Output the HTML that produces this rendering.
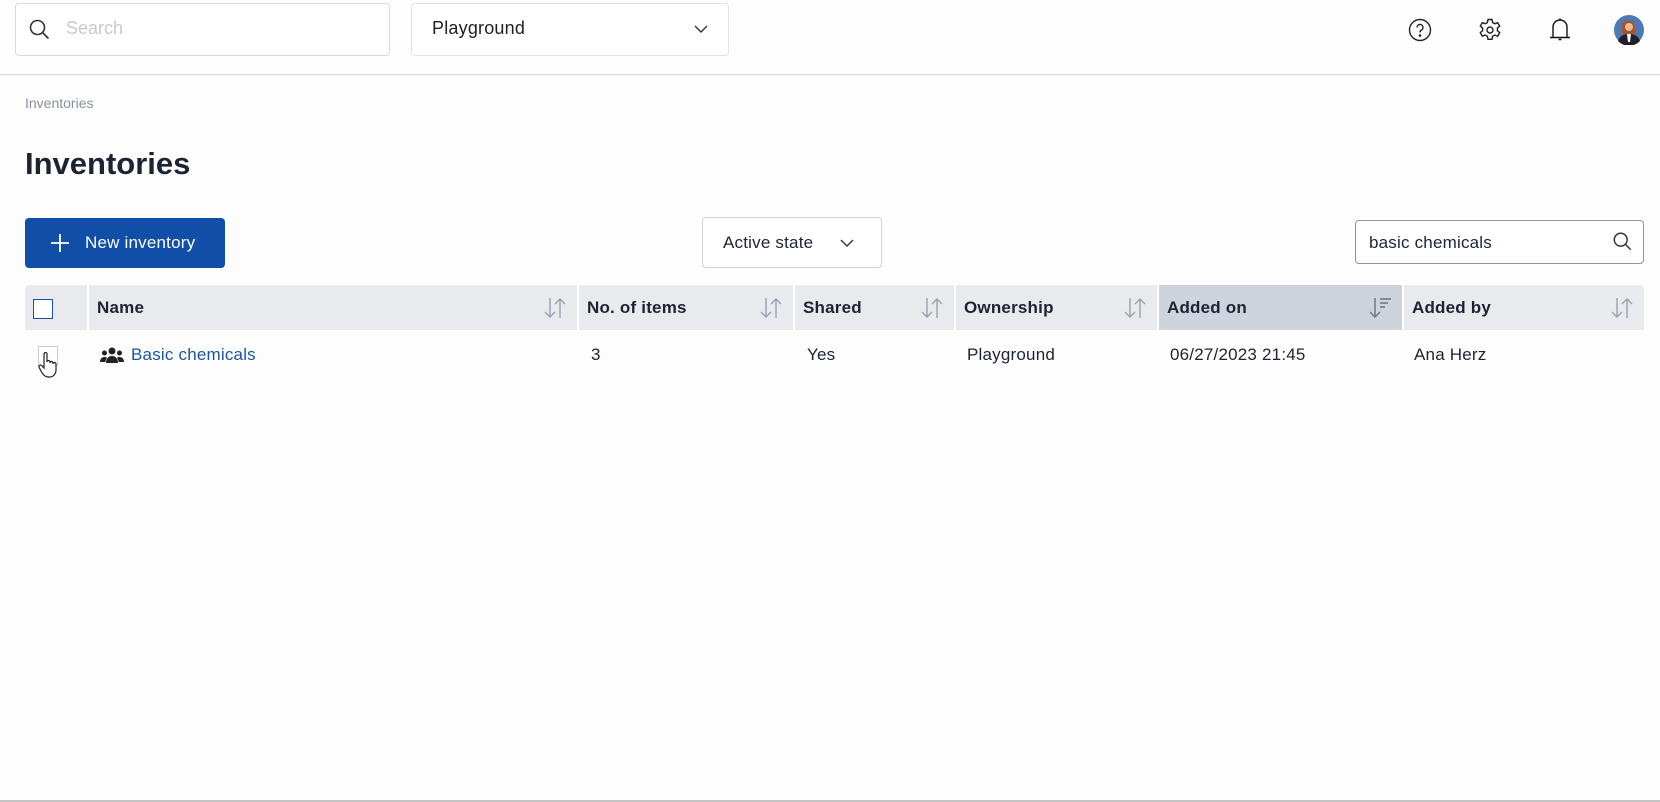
<!DOCTYPE html>
<html><head><meta charset="utf-8"><style>
*{box-sizing:border-box;margin:0;padding:0}
body{width:1660px;height:802px;background:#fdfdfd;font-family:"Liberation Sans",Arial,sans-serif;color:#1c2333;position:relative;overflow:hidden}
.abs{position:absolute}
.box{border:1px solid #cfd3dc;border-radius:4px;background:#fff}
.th{position:absolute;top:285px;height:45px;background:#e9eaee;font-weight:bold;font-size:17px;line-height:45px;padding-left:8px;letter-spacing:0.2px}
.th .s{position:absolute;right:10px;top:12px}
.td{position:absolute;top:344px;font-size:17px;line-height:22px;letter-spacing:0.2px}
</style></head><body>
<div class="abs box" style="left:15px;top:3px;width:375px;height:53px;border-color:#d6d9e0"></div>
<svg class="abs" style="left:28px;top:18px" width="24" height="24" viewBox="0 0 24 24" fill="none" stroke="#333" stroke-width="1.6"><circle cx="9.5" cy="9.5" r="7"/><path d="M14.5 14.5l6 6"/></svg>
<div class="abs" style="left:66px;top:18px;font-size:18px;color:#c4c9d4">Search</div>
<div class="abs box" style="left:411px;top:3px;width:318px;height:53px;border-color:#e2e4ea"></div>
<div class="abs" style="left:432px;top:18px;font-size:18px;color:#222;letter-spacing:0.2px">Playground</div>
<svg class="abs" style="left:694px;top:24px" width="14" height="10" viewBox="0 0 14 10" fill="none" stroke="#333" stroke-width="1.4"><path d="M1 2l6 6 6-6"/></svg>
<svg class="abs" style="left:1408px;top:18px" width="24" height="24" viewBox="0 0 24 24" fill="none" stroke="#222" stroke-width="1.4"><circle cx="12" cy="12" r="10.5"/><path d="M9 9.5a3 3 0 1 1 4 2.8c-1 .5-1 1.2-1 2.2"/><circle cx="12" cy="17.5" r=".6" fill="#222"/></svg>
<svg class="abs" style="left:1478px;top:18px" width="24" height="24" viewBox="0 0 24 24" fill="none" stroke="#222" stroke-width="1.4"><path d="M10 1.5h4l.6 3 2.2 1.2 2.9-1 2 3.4-2.3 2v2.6l2.3 2-2 3.4-2.9-1-2.2 1.2-.6 3h-4l-.6-3-2.2-1.2-2.9 1-2-3.4 2.3-2v-2.6l-2.3-2 2-3.4 2.9 1 2.2-1.2z"/><circle cx="12" cy="12" r="3"/></svg>
<svg class="abs" style="left:1548px;top:17px" width="24" height="26" viewBox="0 0 24 26" fill="none" stroke="#111" stroke-width="1.4"><path d="M5 20V10a7 7 0 0 1 14 0v10M2 20.5h20M12 1.5v1.5M10.5 22.5h3"/></svg>
<svg class="abs" style="left:1614px;top:15px" width="30" height="30" viewBox="0 0 30 30"><circle cx="15" cy="15" r="15" fill="#4d79b5"/><path d="M8 10c0-6 13-6 13 1v8H8z" fill="#a5532f"/><circle cx="15" cy="12" r="4" fill="#e8b89a"/><path d="M4 26c2-6 7-7 11-7s9 1 11 7a15 15 0 0 1-22 0z" fill="#1f1f2a"/><path d="M13 19h4l-1 8h-2z" fill="#fff"/></svg>
<div class="abs" style="left:0;top:74px;width:1660px;height:1px;background:#d6d6e0"></div>
<div class="abs" style="left:25px;top:95px;font-size:14px;color:#8a909c">Inventories</div>
<div class="abs" style="left:25px;top:146px;font-size:31px;font-weight:bold;color:#1c2333">Inventories</div>
<div class="abs" style="left:25px;top:218px;width:200px;height:50px;background:#104ea8;border-radius:4px;color:#fff;font-size:17px;line-height:50px;padding-left:60px;letter-spacing:0.2px">New inventory</div>
<svg class="abs" style="left:51px;top:234px" width="18" height="18" viewBox="0 0 18 18" stroke="#fff" stroke-width="1.8"><path d="M9 0v18M0 9h18"/></svg>
<div class="abs box" style="left:702px;top:217px;width:180px;height:51px"></div>
<div class="abs" style="left:723px;top:233px;font-size:17px;letter-spacing:0.2px">Active state</div>
<svg class="abs" style="left:840px;top:238px" width="14" height="10" viewBox="0 0 14 10" fill="none" stroke="#333" stroke-width="1.4"><path d="M1 2l6 6 6-6"/></svg>
<div class="abs box" style="left:1355px;top:220px;width:289px;height:44px;border-color:#8c93a6"></div>
<div class="abs" style="left:1369px;top:233px;font-size:17px;letter-spacing:0.2px">basic chemicals</div>
<svg class="abs" style="left:1612px;top:231px" width="22" height="22" viewBox="0 0 24 24" fill="none" stroke="#333" stroke-width="1.6"><circle cx="9.5" cy="9.5" r="7"/><path d="M14.5 14.5l6 6"/></svg>
<div class="abs" style="left:25px;top:285px;width:62px;height:45px;background:#e9eaee;border-radius:4px 0 0 0"></div>
<div class="abs" style="left:33px;top:299px;width:20px;height:20px;border:1.5px solid #1a4fa0;background:#fff"></div>
<div class="th" style="left:89px;width:488px">Name<svg class="s" width="24" height="22" viewBox="0 0 24 22" fill="none" stroke="#9aa0ae" stroke-width="1.4"><path d="M7 1v19M2 15l5 5 5-5M17 21V2M12 7l5-5 5 5"/></svg></div>
<div class="th" style="left:579px;width:214px">No. of items<svg class="s" width="24" height="22" viewBox="0 0 24 22" fill="none" stroke="#9aa0ae" stroke-width="1.4"><path d="M7 1v19M2 15l5 5 5-5M17 21V2M12 7l5-5 5 5"/></svg></div>
<div class="th" style="left:795px;width:159px">Shared<svg class="s" width="24" height="22" viewBox="0 0 24 22" fill="none" stroke="#9aa0ae" stroke-width="1.4"><path d="M7 1v19M2 15l5 5 5-5M17 21V2M12 7l5-5 5 5"/></svg></div>
<div class="th" style="left:956px;width:201px">Ownership<svg class="s" width="24" height="22" viewBox="0 0 24 22" fill="none" stroke="#9aa0ae" stroke-width="1.4"><path d="M7 1v19M2 15l5 5 5-5M17 21V2M12 7l5-5 5 5"/></svg></div>
<div class="th" style="left:1159px;width:243px;background:#cfd3dc">Added on<svg class="s" width="24" height="22" viewBox="0 0 24 22" fill="none" stroke="#6b7282" stroke-width="1.4"><path d="M7 1v19M2 15l5 5 5-5M12 2h11M12 6h8M12 10h5"/></svg></div>
<div class="th" style="left:1404px;width:240px;border-radius:0 4px 0 0">Added by<svg class="s" width="24" height="22" viewBox="0 0 24 22" fill="none" stroke="#9aa0ae" stroke-width="1.4"><path d="M7 1v19M2 15l5 5 5-5M17 21V2M12 7l5-5 5 5"/></svg></div>
<div class="abs" style="left:38px;top:346px;width:20px;height:20px;border:1px solid #c9ccd6;background:#fff"></div>
<svg class="abs" style="left:38px;top:352px" width="20" height="26" viewBox="0 0 20 26" fill="#fff" stroke="#222" stroke-width="1.2"><path d="M6 2a1.5 1.5 0 0 1 3 0v8a1.5 1.5 0 0 1 3 0v1a1.5 1.5 0 0 1 3 0v1a1.5 1.5 0 0 1 3 0v6c0 4-3 7-6 7h-2c-3 0-5-2-7-6l-2-4a1.5 1.5 0 0 1 2.5-1.5L6 16z"/></svg>
<svg class="abs" style="left:100px;top:347px" width="24" height="17" viewBox="0 0 24 17" fill="#222"><circle cx="12" cy="4" r="3.5"/><circle cx="4.5" cy="6" r="2.5"/><circle cx="19.5" cy="6" r="2.5"/><path d="M6 16c0-5 3-7 6-7s6 2 6 7z"/><path d="M0 15c0-3 2-5 4.5-5 1 0 2 .3 2.5 1-1 1.3-1.5 2.5-1.5 4z"/><path d="M24 15c0-3-2-5-4.5-5-1 0-2 .3-2.5 1 1 1.3 1.5 2.5 1.5 4z"/></svg>
<div class="td" style="left:131px;color:#1b55a2">Basic chemicals</div>
<div class="td" style="left:591px">3</div>
<div class="td" style="left:807px">Yes</div>
<div class="td" style="left:967px">Playground</div>
<div class="td" style="left:1170px">06/27/2023 21:45</div>
<div class="td" style="left:1414px">Ana Herz</div>
<div class="abs" style="left:0;top:800px;width:1660px;height:2px;background:#c4c4c4"></div>
</body></html>
